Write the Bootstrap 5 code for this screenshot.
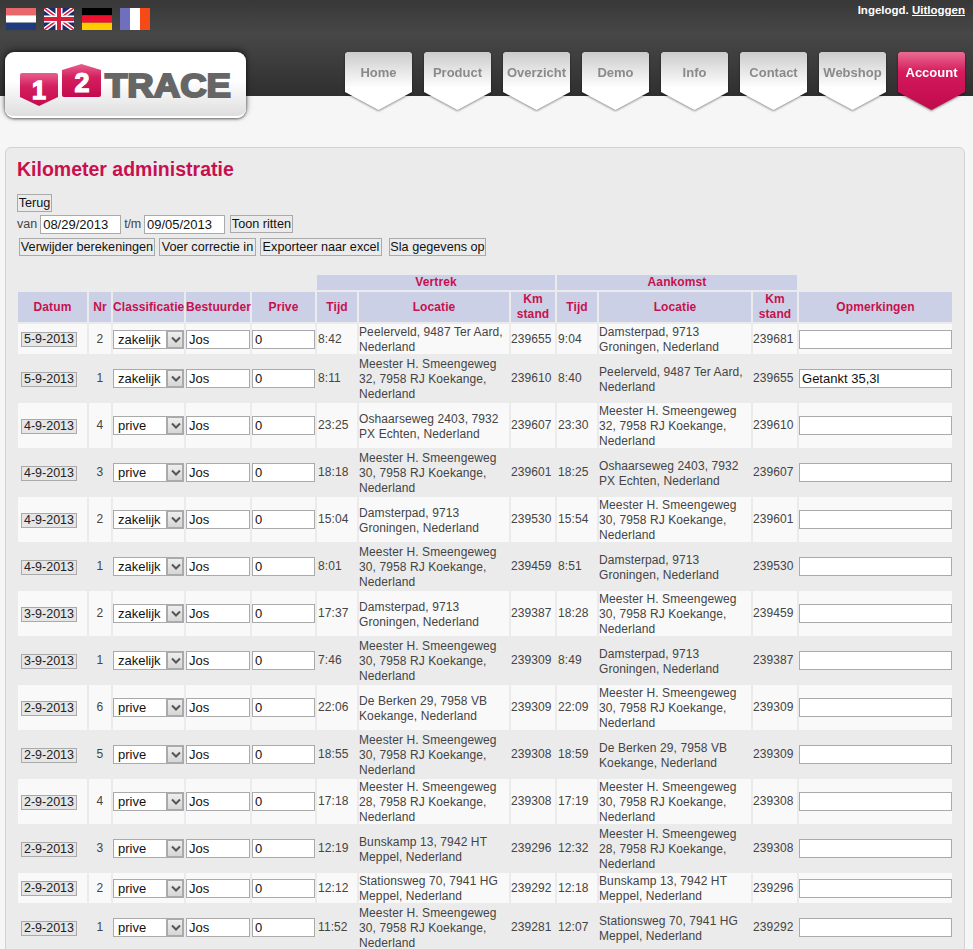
<!DOCTYPE html>
<html lang="nl">
<head>
<meta charset="UTF-8">
<title>Kilometer administratie</title>
<link href="https://cdn.jsdelivr.net/npm/bootstrap@5.3.0/dist/css/bootstrap.min.css" rel="stylesheet">
<style>
html, body { overflow: hidden; height: 949px; }
body { background: #f6f6f6; font: 12px/15px "Liberation Sans", Arial, sans-serif; color: #444; }
.topbar { height: 96px; background: linear-gradient(#383838, #474747 35%, #3e3e3e 60%, #2f2f2f); }
.flags { height: 52px; padding: 8px 0 0 6px; gap: 8px; }
.flag { width: 30px; height: 22px; display: block; }
.login { position: absolute; top: 3px; right: 8px; color: #fff; font-weight: 700; font-size: 11.5px; }
.login a { color: #fff; }
.logo { width: 241px; height: 66px; margin-left: 5px; background: linear-gradient(#fff 45%, #dedede); border-radius: 9px; box-shadow: 0 1px 3px rgba(0,0,0,.55), 0 -2px 6px rgba(0,0,0,.5); border-bottom: 2px solid #fff; }
.logo svg { display: block; }
.tabs { gap: 12px; padding-right: 8px; margin-left: auto; }
.tabwrap { filter: drop-shadow(0 1px 1px rgba(0,0,0,.45)); }
.tab { display: block; width: 67px; height: 58px; padding-top: 13px; text-align: center; text-decoration: none; font-size: 13px; line-height: 16px; font-weight: 700; color: #8a8a8a;
  background: linear-gradient(#cbcbcb, #fff 62%); clip-path: polygon(3% 0, 97% 0, 100% 3%, 100% 69%, 50% 100%, 0 69%, 0 3%); }
.tab.current { color: #fff; background: linear-gradient(#ea6c92, #d4195c 35%, #c00a4c); }
.panel { margin: 51px 8px 0 5px; padding: 9px 11px 0; height: 900px; background: #ebebeb; border: 1px solid #d2d2d2; border-radius: 6px 6px 0 0; }
.pagetitle { color: #c8104f; font: 700 19.5px/24px "Liberation Sans", Arial, sans-serif; margin: 0 0 13px; }
.plainbtn { display: inline-block; padding: 0; height: 18px; white-space: nowrap; font: 12.67px/16px "Liberation Sans", Arial, sans-serif; color: #111; background: #ebebeb; border: 1px solid #aaa; }
.btn-terug { width: 35px; }
.btn-verwijder { width: 136px; }
.btn-correctie { width: 97px; }
.btn-export { width: 122px; }
.btn-opslaan { width: 97px; margin-left: 3px; }
.btn-toon { width: 63px; margin-left: 2px; }
.datein { width: 81px; height: 19px; padding: 0 2px; font: 13px/15px "Liberation Sans", Arial, sans-serif; color: #111; background: #fff; border: 1px solid #aaa; }
.filterline { height: 22px; gap: 3px; font-size: 12.5px; margin-top: 1px; }
.filterline .tm { letter-spacing: -.2px; }
.actionline { height: 24px; padding-left: 2px; gap: 4px; }
.ritten { border-collapse: separate; border-spacing: 2px; table-layout: fixed; width: 938px; margin: 14px 0 0 -1px; letter-spacing: .1px; }
.ritten th { background: #cbd0e6; color: #c8104f; text-align: center; font-weight: 700; padding: 0; height: 30px; vertical-align: middle; }
.ritten .grouphead th { height: 15px; }
.ritten .grouphead th.leeg { background: transparent; }
.ritten td { padding: 0 0 0 1px; height: 30px; vertical-align: middle; }
.ritten tbody tr:nth-child(odd) td { background: #f9f9f9; }
.ritten td.smal { text-align: center; padding: 0; }
.ritten td.datumcel { padding: 0 0 0 3px; }
.adres { margin: 1px 0 -1px; }
.celin { display: block; width: 100%; height: 19px; padding: 0 2px; font: 13px/15px "Liberation Sans", Arial, sans-serif; color: #111; background: #fff; border: 1px solid #aaa; }
.datumknop { display: block; width: 56px; height: 15px; margin-top: 1px; font: 12.5px/13px "Liberation Sans", Arial, sans-serif; color: #222; background: #e6e6e6; border: 1px solid #aaa; padding: 0; }
.keuze { position: relative; }
.keuze select { appearance: none; display: block; width: 100%; height: 19px; padding: 0 0 0 4px; font: 13px/15px "Liberation Sans", Arial, sans-serif; color: #111; background: #fff; border: 1px solid #aaa; border-radius: 0; }
.pijl { position: absolute; top: 0; right: 0; width: 18px; height: 19px; background: linear-gradient(#eee, #d6d6d6); border: 2px solid #aaa; }
.pijl svg { display: block; margin: 4px 0 0 3px; }
</style>
</head>
<body>

<div class="topbar position-relative">
  <div class="flags d-flex">
    <svg class="flag" viewBox="0 0 30 22"><rect width="30" height="7.3" fill="#e8676b"/><rect y="7.3" width="30" height="7.4" fill="#fff"/><rect y="14.7" width="30" height="7.3" fill="#1f3a7d"/></svg>
    <svg class="flag" viewBox="0 0 30 22"><rect width="30" height="22" fill="#1c2a6e"/><path d="M0 0 30 22M30 0 0 22" stroke="#fff" stroke-width="4.4"/><path d="M0 0 30 22M30 0 0 22" stroke="#d3203c" stroke-width="1.5"/><path d="M15 0V22M0 11H30" stroke="#fff" stroke-width="7"/><path d="M15 0V22M0 11H30" stroke="#d3203c" stroke-width="4"/></svg>
    <svg class="flag" viewBox="0 0 30 22"><rect width="30" height="7.3" fill="#000"/><rect y="7.3" width="30" height="7.4" fill="#f0102f"/><rect y="14.7" width="30" height="7.3" fill="#ffcc00"/></svg>
    <svg class="flag" viewBox="0 0 30 22"><rect width="10" height="22" fill="#6f6fbd"/><rect x="10" width="10" height="22" fill="#fff"/><rect x="20" width="10" height="22" fill="#f64a16"/></svg>
  </div>
  <div class="login">Ingelogd. <a href="#">Uitloggen</a></div>
  <div class="d-flex align-items-start">
    <div class="logo">
      <svg width="241" height="64" viewBox="0 0 241 64">
        <defs>
          <linearGradient id="roze" x1="0" y1="0" x2="0" y2="1"><stop offset="0" stop-color="#e8608c"/><stop offset=".4" stop-color="#d4205f"/><stop offset="1" stop-color="#c40a4e"/></linearGradient>
        </defs>
        <path d="M17 21H51a2 2 0 0 1 2 2V45L34 54 15 45V23a2 2 0 0 1 2-2Z" fill="url(#roze)"/>
        <path d="M76.500 12 96 18V43a2 2 0 0 1-2 2H59a2 2 0 0 1-2-2V18Z" fill="url(#roze)"/>
        <text x="34" y="47" text-anchor="middle" fill="#fff" font-family="Liberation Sans" font-weight="700" font-size="25" stroke="#fff" stroke-width="1.4">1</text>
        <text x="77" y="40" text-anchor="middle" fill="#fff" font-family="Liberation Sans" font-weight="700" font-size="27" stroke="#fff" stroke-width="1.2">2</text>
        <text x="100" y="45" textLength="126" lengthAdjust="spacingAndGlyphs" fill="#666" stroke="#666" stroke-width="2" font-family="Liberation Sans" font-weight="700" font-size="33">TRACE</text>
      </svg>
    </div>
    <nav class="tabs d-flex">
      <div class="tabwrap"><a class="tab" href="#">Home</a></div>
      <div class="tabwrap"><a class="tab" href="#">Product</a></div>
      <div class="tabwrap"><a class="tab" href="#">Overzicht</a></div>
      <div class="tabwrap"><a class="tab" href="#">Demo</a></div>
      <div class="tabwrap"><a class="tab" href="#">Info</a></div>
      <div class="tabwrap"><a class="tab" href="#">Contact</a></div>
      <div class="tabwrap"><a class="tab" href="#">Webshop</a></div>
      <div class="tabwrap"><a class="tab current" href="#">Account</a></div>
    </nav>
  </div>
</div>

<div class="panel">
  <h1 class="pagetitle">Kilometer administratie</h1>
  <div><button class="plainbtn btn-terug" type="button">Terug</button></div>
  <div class="filterline d-flex align-items-center">
    <span>van</span><input class="datein" value="08/29/2013"><span class="tm">t/m</span><input class="datein" value="09/05/2013"><button class="plainbtn btn-toon" type="button">Toon ritten</button>
  </div>
  <div class="actionline d-flex align-items-center">
    <button class="plainbtn btn-verwijder" type="button">Verwijder berekeningen</button>
    <button class="plainbtn btn-correctie" type="button">Voer correctie in</button>
    <button class="plainbtn btn-export" type="button">Exporteer naar excel</button>
    <button class="plainbtn btn-opslaan" type="button">Sla gegevens op</button>
  </div>

  <table class="ritten">
    <colgroup>
      <col style="width:69px"><col style="width:22px"><col style="width:71px"><col style="width:64px"><col style="width:63px"><col style="width:40px"><col style="width:150px"><col style="width:44px"><col style="width:40px"><col style="width:152px"><col style="width:44px"><col style="width:153px">
    </colgroup>
    <thead>
      <tr class="grouphead"><th class="leeg" colspan="5"></th><th colspan="3">Vertrek</th><th colspan="3">Aankomst</th><th class="leeg"></th></tr>
      <tr><th>Datum</th><th>Nr</th><th>Classificatie</th><th>Bestuurder</th><th>Prive</th><th>Tijd</th><th>Locatie</th><th>Km stand</th><th>Tijd</th><th>Locatie</th><th>Km stand</th><th>Opmerkingen</th></tr>
    </thead>
    <tbody id="ritten"></tbody>
  </table>
</div>

<script>
    const pe = 'Peelerveld, 9487 Ter Aard, Nederland';
    const da = 'Damsterpad, 9713 Groningen, Nederland';
    const m30 = 'Meester H. Smeengeweg 30, 7958 RJ Koekange, Nederland';
    const m32 = 'Meester H. Smeengeweg 32, 7958 RJ Koekange, Nederland';
    const m28 = 'Meester H. Smeengeweg 28, 7958 RJ Koekange, Nederland';
    const os = 'Oshaarseweg 2403, 7932 PX Echten, Nederland';
    const be = 'De Berken 29, 7958 VB Koekange, Nederland';
    const bu = 'Bunskamp 13, 7942 HT Meppel, Nederland';
    const st = 'Stationsweg 70, 7941 HG Meppel, Nederland';

    const ritten = [
        ['5-9-2013', 2, 'zakelijk', '8:42', pe, 239655, '9:04', da, 239681, ''],
        ['5-9-2013', 1, 'zakelijk', '8:11', m32, 239610, '8:40', pe, 239655, 'Getankt 35,3l'],
        ['4-9-2013', 4, 'prive', '23:25', os, 239607, '23:30', m32, 239610, ''],
        ['4-9-2013', 3, 'prive', '18:18', m30, 239601, '18:25', os, 239607, ''],
        ['4-9-2013', 2, 'zakelijk', '15:04', da, 239530, '15:54', m30, 239601, ''],
        ['4-9-2013', 1, 'zakelijk', '8:01', m30, 239459, '8:51', da, 239530, ''],
        ['3-9-2013', 2, 'zakelijk', '17:37', da, 239387, '18:28', m30, 239459, ''],
        ['3-9-2013', 1, 'zakelijk', '7:46', m30, 239309, '8:49', da, 239387, ''],
        ['2-9-2013', 6, 'prive', '22:06', be, 239309, '22:09', m30, 239309, ''],
        ['2-9-2013', 5, 'prive', '18:55', m30, 239308, '18:59', be, 239309, ''],
        ['2-9-2013', 4, 'prive', '17:18', m28, 239308, '17:19', m30, 239308, ''],
        ['2-9-2013', 3, 'prive', '12:19', bu, 239296, '12:32', m28, 239308, ''],
        ['2-9-2013', 2, 'prive', '12:12', st, 239292, '12:18', bu, 239296, ''],
        ['2-9-2013', 1, 'prive', '11:52', m30, 239281, '12:07', st, 239292, '']
    ];

    const pijl = '<span class="pijl"><svg width="10" height="8" viewBox="0 0 10 8"><path d="M1 1.5 5 5.5 9 1.5" fill="none" stroke="#555" stroke-width="2"/></svg></span>';

    document.getElementById('ritten').innerHTML = ritten.map(r => `
      <tr>
        <td class="datumcel"><button class="datumknop" type="button">${r[0]}</button></td>
        <td class="smal">${r[1]}</td>
        <td class="px-0"><div class="keuze"><select><option>${r[2]}</option></select>${pijl}</div></td>
        <td class="px-0"><input class="celin" value="Jos"></td>
        <td class="px-0"><input class="celin" value="0"></td>
        <td>${r[3]}</td>
        <td class="px-0"><div class="adres">${r[4]}</div></td>
        <td class="px-0">${r[5]}</td>
        <td>${r[6]}</td>
        <td class="px-0"><div class="adres">${r[7]}</div></td>
        <td class="px-0">${r[8]}</td>
        <td class="px-0"><input class="celin" value="${r[9]}"></td>
      </tr>`).join('');
</script>
<script src="https://cdn.jsdelivr.net/npm/bootstrap@5.3.0/dist/js/bootstrap.bundle.min.js"></script>
</body>
</html>
